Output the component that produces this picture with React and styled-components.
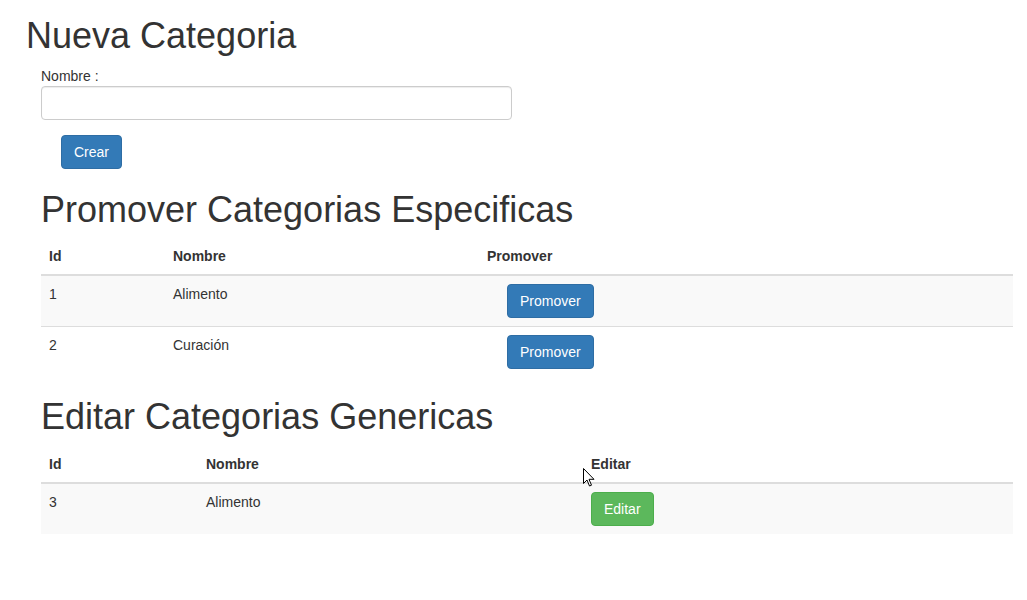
import React from "react";
import styled, { createGlobalStyle } from "styled-components";

const Global = createGlobalStyle`
  html, body { margin: 0; padding: 0; background: #fff; }
  body {
    font-family: "Liberation Sans", Arial, Helvetica, sans-serif;
    font-size: 14px;
    line-height: 1.42857143;
    color: #333;
  }
  * { box-sizing: border-box; }
`;

const Page = styled.div`
  position: relative;
  padding: 16px 14px 40px 26px;
`;

const Title = styled.h1`
  margin: ${(p) => (p.$first ? "0 0 10px 0" : "20px 0 9px 0")};
  font-size: 36px;
  font-weight: 500;
  line-height: 1.1;
  color: #333;
`;

const Section = styled.div`
  padding-left: 15px;
`;

const Label = styled.label`
  display: block;
  margin: 0;
  font-weight: 400;
`;

const Input = styled.input`
  display: block;
  width: 471px;
  height: 34px;
  padding: 6px 12px;
  font-size: 14px;
  font-family: inherit;
  color: #555;
  background: #fff;
  border: 1px solid #ccc;
  border-radius: 4px;
  box-shadow: inset 0 1px 1px rgba(0, 0, 0, 0.075);
  outline: none;
`;

const Button = styled.button`
  display: inline-block;
  margin: 0 0 0 ${(p) => (p.$offset ? "20px" : "0")};
  padding: 6px 12px;
  font-family: inherit;
  font-size: 14px;
  line-height: 1.42857143;
  color: #fff;
  background: ${(p) => (p.$variant === "success" ? "#5cb85c" : "#337ab7")};
  border: 1px solid ${(p) => (p.$variant === "success" ? "#4cae4c" : "#2e6da4")};
  border-radius: 4px;
  cursor: pointer;
  vertical-align: middle;
`;

const FormActions = styled.div`
  margin-top: 15px;
  padding-bottom: 1px;
`;

const Table = styled.table`
  width: 972px;
  margin-bottom: 20px;
  border-collapse: collapse;
  border-spacing: 0;
  table-layout: fixed;
`;

const Th = styled.th`
  padding: 8px;
  text-align: left;
  font-weight: 700;
  line-height: 1.42857143;
  vertical-align: bottom;
  border-bottom: 2px solid #ddd;
`;

const Tr = styled.tr`
  background: ${(p) => (p.$striped ? "#f9f9f9" : "transparent")};
`;

const Td = styled.td`
  padding: 8px;
  line-height: 1.42857143;
  vertical-align: top;
  border-top: 1px solid #ddd;
`;

const Cursor = styled.svg`
  position: absolute;
  left: 583px;
  top: 468px;
  pointer-events: none;
`;

function DataTable({ widths, action, rows, variant, offset }) {
  return (
    <Table>
      <colgroup>
        <col style={{ width: widths[0] }} />
        <col style={{ width: widths[1] }} />
        <col />
      </colgroup>
      <thead>
        <tr>
          <Th>Id</Th>
          <Th>Nombre</Th>
          <Th>{action}</Th>
        </tr>
      </thead>
      <tbody>
        {rows.map((r, i) => (
          <Tr key={r.id} $striped={i % 2 === 0}>
            <Td>{r.id}</Td>
            <Td>{r.name}</Td>
            <Td>
              <Button $variant={variant} $offset={offset}>
                {action}
              </Button>
            </Td>
          </Tr>
        ))}
      </tbody>
    </Table>
  );
}

export default function App() {
  return (
    <>
      <Global />
      <Page>
        <Title $first>Nueva Categoria</Title>
        <Section>
          <Label>Nombre :</Label>
          <Input type="text" />
          <FormActions>
            <Button $offset>Crear</Button>
          </FormActions>
          <Title>Promover Categorias Especificas</Title>
          <DataTable
            widths={[124, 314]}
            action="Promover"
            variant="primary"
            offset
            rows={[
              { id: 1, name: "Alimento" },
              { id: 2, name: "Curación" },
            ]}
          />
          <Title>Editar Categorias Genericas</Title>
          <DataTable
            widths={[157, 385]}
            action="Editar"
            variant="success"
            rows={[{ id: 3, name: "Alimento" }]}
          />
        </Section>
        <Cursor width="12" height="19" viewBox="0 0 12 19">
          <path
            d="M0.5 0.5 L0.5 15.5 L4 12 L6.5 18 L8.5 17.2 L6 11.3 L11 11.3 Z"
            fill="#fff"
            stroke="#000"
            strokeWidth="1"
            strokeLinejoin="miter"
          />
        </Cursor>
      </Page>
    </>
  );
}
